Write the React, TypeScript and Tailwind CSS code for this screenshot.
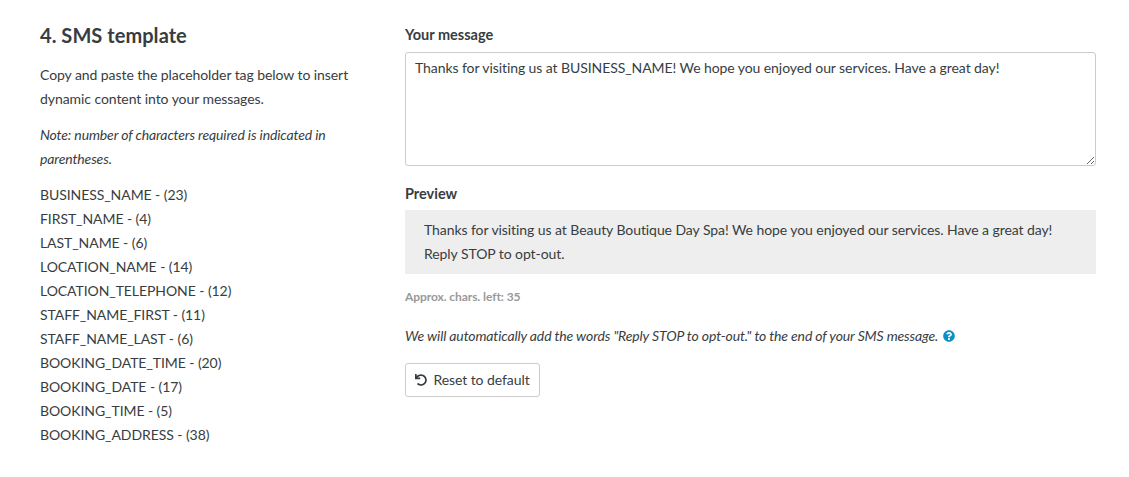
import { FaQuestionCircle, FaUndo } from "react-icons/fa";

const tags = [
  "BUSINESS_NAME - (23)",
  "FIRST_NAME - (4)",
  "LAST_NAME - (6)",
  "LOCATION_NAME - (14)",
  "LOCATION_TELEPHONE - (12)",
  "STAFF_NAME_FIRST - (11)",
  "STAFF_NAME_LAST - (6)",
  "BOOKING_DATE_TIME - (20)",
  "BOOKING_DATE - (17)",
  "BOOKING_TIME - (5)",
  "BOOKING_ADDRESS - (38)",
];

export default function App() {
  return (
    <div className="flex h-[477px] w-[1129px] overflow-hidden bg-white pl-10 pt-5 font-['Lato',sans-serif] text-sm leading-6 tracking-[-0.07px] text-[#373d41]">
      <div className="w-[365px] shrink-0 pr-[15px]">
        <h2 className="mb-[13px] text-[20px] leading-[30px] font-bold tracking-[0.05px] text-[#373d41]">4. SMS template</h2>
        <p className="mb-3 w-[320px]">
          Copy and paste the placeholder tag below to insert dynamic content into your messages.
        </p>
        <p className="mb-3 w-[310px] italic tracking-[-0.13px]">
          Note: number of characters required is indicated in parentheses.
        </p>
        <ul>
          {tags.map((tag) => (
            <li key={tag}>{tag}</li>
          ))}
        </ul>
      </div>
      <div className="w-[691px] shrink-0">
        <label className="mb-[5px] block h-[27px] pt-[3px] text-[14.5px] font-bold tracking-normal">Your message</label>
        <textarea
          readOnly
          className="block h-[114px] w-full rounded-[3px] border border-[#ccc] px-[9px] py-[3px] leading-6 tracking-[-0.08px] text-[#373d41] outline-none"
          defaultValue="Thanks for visiting us at BUSINESS_NAME! We hope you enjoyed our services. Have a great day!"
        />
        <h3 className="mt-[15px] mb-[5px] h-[24px] pt-px text-[14.5px] font-bold tracking-normal">Preview</h3>
        <div className="bg-[#eee] py-2 pr-[19px] pl-[19px]">
          Thanks for visiting us at Beauty Boutique Day Spa! We hope you enjoyed our services. Have a great day!
          <br />
          Reply STOP to opt-out.
        </div>
        <p className="mt-[15px] text-xs font-bold text-[#999]">Approx. chars. left: 35</p>
        <p className="mt-[19px] flex items-center italic tracking-[-0.135px]">
          We will automatically add the words "Reply STOP to opt-out." to the end of your SMS message.
          <FaQuestionCircle className="ml-[5px] text-[12px] text-[#0b8fc7]" />
        </p>
        <button
          type="button"
          className="mt-[15px] flex h-[34px] w-[135px] items-center justify-center gap-[6px] rounded-[3px] border border-[#ccc] bg-white text-sm"
        >
          <FaUndo className="text-[12px]" />
          Reset to default
        </button>
      </div>
    </div>
  );
}
